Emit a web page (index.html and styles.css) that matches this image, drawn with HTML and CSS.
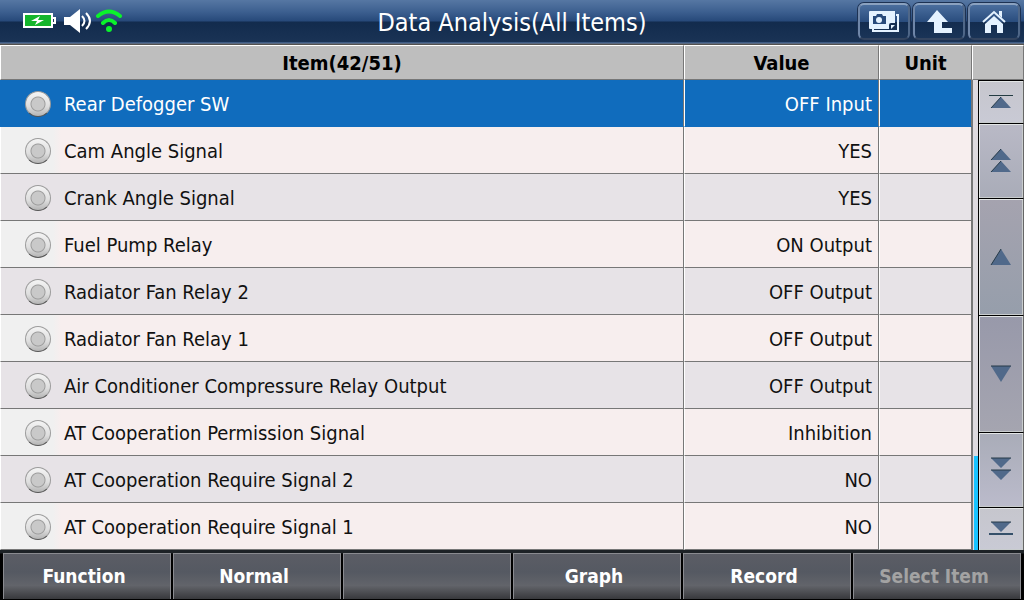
FILE: index.html
```html
<!DOCTYPE html>
<html lang="en">
<head>
  <meta charset="UTF-8">
  <meta name="viewport" content="width=device-width, initial-scale=1.0">
  <title>Data Analysis</title>
  <link rel="stylesheet" href="styles.css">
</head>
<body>
  <header class="topbar">
    <div class="status">
      <svg class="battery" width="34" height="18" viewBox="0 0 34 18">
        <path d="M1 1h30v4h3v7h-3v4H1z" fill="#fff"/>
        <path d="M3 3h26v11H3z" fill="#14b52c"/>
        <path d="M31 7h1v3h-1z" fill="#1c3457"/>
        <path d="M18 4l-9 5h6l-2 4 9-5h-6z" fill="#fff"/>
      </svg>
      <svg class="sound" width="28" height="24" viewBox="0 0 28 24">
        <path d="M0 8h6L16 0v24l-10-8H0z" fill="#fff"/>
        <path d="M18 7q5 5 0 10M22 4q8 8 0 16" fill="none" stroke="#fff" stroke-width="2"/>
      </svg>
      <svg class="wifi" width="28" height="24" viewBox="0 0 28 24">
        <path d="M3 7Q14-2 25 7M8 14q6-6 12 0" fill="none" stroke="#0bf22b" stroke-width="4" stroke-linecap="round"/>
        <circle cx="14" cy="20" r="3" fill="#0bf22b"/>
      </svg>
    </div>
    <h1 class="title">Data Analysis(All Items)</h1>
    <div class="tools">
      <button class="tool" type="button" aria-label="Capture">
        <svg width="34" height="24" viewBox="0 0 34 24">
          <path d="M29 5h2v16H6v-2" fill="none" stroke="#e4f2ff" stroke-width="2"/>
          <path d="M3 1h25v12h-4q-2 0-2 2v4H3q-1 0-1-1V2q0-1 1-1z" fill="#e4f2ff"/>
          <path d="M24 19v-4h4z" fill="#e4f2ff"/>
          <path d="M6 6h3l1-2h5l1 2h3v8H6z" fill="#274a7b"/>
          <circle cx="12" cy="10" r="3" fill="#e4f2ff"/>
        </svg>
      </button>
      <button class="tool" type="button" aria-label="Back">
        <svg width="28" height="26" viewBox="0 0 28 26">
          <path d="M12 1l11 12h-6v6h10v5H9V13H2z" fill="#e4f2ff"/>
        </svg>
      </button>
      <button class="tool" type="button" aria-label="Home">
        <svg width="26" height="26" viewBox="0 0 26 26">
          <path d="M2 13L13 3l11 10" fill="none" stroke="#e4f2ff" stroke-width="2"/>
          <path d="M18 2h3v7l-3-3zM4 15l9-8 9 8v9h-6v-8h-6v8H4z" fill="#e4f2ff"/>
        </svg>
      </button>
    </div>
  </header>

  <main class="content">
    <table class="items">
      <colgroup>
        <col>
        <col class="col-value">
        <col class="col-unit">
      </colgroup>
      <thead>
        <tr><th>Item(42/51)</th><th>Value</th><th>Unit</th></tr>
      </thead>
      <tbody>
        <tr class="selected"><td><label class="item"><input type="radio" name="item"><span>Rear Defogger SW</span></label></td><td>OFF Input</td><td></td></tr>
        <tr><td><label class="item"><input type="radio" name="item"><span>Cam Angle Signal</span></label></td><td>YES</td><td></td></tr>
        <tr><td><label class="item"><input type="radio" name="item"><span>Crank Angle Signal</span></label></td><td>YES</td><td></td></tr>
        <tr><td><label class="item"><input type="radio" name="item"><span>Fuel Pump Relay</span></label></td><td>ON Output</td><td></td></tr>
        <tr><td><label class="item"><input type="radio" name="item"><span>Radiator Fan Relay 2</span></label></td><td>OFF Output</td><td></td></tr>
        <tr><td><label class="item"><input type="radio" name="item"><span>Radiator Fan Relay 1</span></label></td><td>OFF Output</td><td></td></tr>
        <tr><td><label class="item"><input type="radio" name="item"><span>Air Conditioner Compressure Relay Output</span></label></td><td>OFF Output</td><td></td></tr>
        <tr><td><label class="item"><input type="radio" name="item"><span>AT Cooperation Permission Signal</span></label></td><td>Inhibition</td><td></td></tr>
        <tr><td><label class="item"><input type="radio" name="item"><span>AT Cooperation Require Signal 2</span></label></td><td>NO</td><td></td></tr>
        <tr><td><label class="item"><input type="radio" name="item"><span>AT Cooperation Require Signal 1</span></label></td><td>NO</td><td></td></tr>
      </tbody>
    </table>

    <aside class="scroller">
      <div class="scroller-head"></div>
      <div class="track"><div class="thumb"></div></div>
      <nav class="pager">
        <button class="end" type="button" aria-label="First">
          <svg width="24" height="16" viewBox="0 0 24 16"><path d="M0 1h24v1H0z" fill="#243c42"/><path d="M12 3l10 11H2z" fill="#50698a"/><path d="M12 3L2 14" stroke="#263a48"/></svg>
        </button>
        <button class="page" type="button" aria-label="Page up">
          <svg width="24" height="26" viewBox="0 0 24 26"><path d="M12 1l10 11H2zM12 13l10 11H2z" fill="#50698a"/><path d="M12 1L2 12M12 13L2 24" stroke="#263a48"/></svg>
        </button>
        <button class="line" type="button" aria-label="Up">
          <svg width="24" height="18" viewBox="0 0 24 18"><path d="M12 1l10 16H2z" fill="#50698a"/><path d="M12 1L2 17" stroke="#263a48"/></svg>
        </button>
        <button class="line down" type="button" aria-label="Down">
          <svg width="24" height="18" viewBox="0 0 24 18"><path d="M2 1h20L12 17z" fill="#50698a"/><path d="M2 1h20" stroke="#263a48"/></svg>
        </button>
        <button class="page down" type="button" aria-label="Page down">
          <svg width="24" height="26" viewBox="0 0 24 26"><path d="M2 1h20L12 11zM2 13h20L12 23z" fill="#50698a"/><path d="M2 1h20M2 13h20" stroke="#263a48"/></svg>
        </button>
        <button class="end down" type="button" aria-label="Last">
          <svg width="24" height="16" viewBox="0 0 24 16"><path d="M2 1h20L12 11z" fill="#50698a"/><path d="M2 1h20" stroke="#263a48"/><path d="M0 12h24v2H0z" fill="#35506a"/></svg>
        </button>
      </nav>
    </aside>
  </main>

  <footer class="menu">
    <button type="button">Function</button>
    <button type="button">Normal</button>
    <button type="button" aria-label="Empty"></button>
    <button type="button">Graph</button>
    <button type="button">Record</button>
    <button type="button" disabled>Select Item</button>
  </footer>
</body>
</html>
```

FILE: styles.css
```css
* {
  box-sizing: border-box;
}
body {
  display: flex;
  flex-direction: column;
  min-height: 100vh;
  margin: 0;
  background: #000;
  color: #111;
  font-family: "DejaVu Sans Condensed", "Noto Sans", sans-serif;
  font-size: 20px;
}
button {
  font-family: inherit;
  cursor: pointer;
}
svg {
  display: block;
}

/* top bar */
.topbar {
  display: grid;
  grid-template-columns: 1fr auto 1fr;
  height: 45px;
  background: linear-gradient(#5677a3 0, #3c5f8f 12px, #27497a 21px, #122b4d 22px, #1a3355 42px, #6384b4 43px, #54514e 44px, #54514e 45px);
}
.status {
  display: flex;
  align-items: center;
  gap: 8px;
  padding: 0 0 5px 22px;
}
.wifi {
  margin-left: -5px;
}
.title {
  margin: 0;
  color: #fff;
  font-size: 25px;
  font-weight: normal;
  line-height: 46px;
}
.tools {
  display: flex;
  justify-content: flex-end;
  align-items: flex-start;
  gap: 3px;
  padding: 3px 4px 0 0;
}
.tool {
  display: flex;
  justify-content: center;
  align-items: center;
  width: 52px;
  height: 37px;
  padding: 0;
  border: 2px solid;
  border-color: #8ba2c0 #4f6788 #33445f #6f86a8;
  border-radius: 6px;
  background: linear-gradient(#4a6e9e, #2a4d7e 50%, #132c4f 51%, #1a3457);
  box-shadow: 0 0 0 1px #1d3253;
}

/* data table */
.content {
  display: flex;
  flex: 1;
  background: #dedadf;
}
.items {
  flex: 1;
  table-layout: fixed;
  border-collapse: separate;
  border-spacing: 0;
}
.col-value {
  width: 195px;
}
.col-unit {
  width: 93px;
}
.items th {
  height: 35px;
  padding: 1px 0 0;
  border: 1px solid #fff;
  border-right-color: #777;
  border-bottom-color: #777;
  background: #bebebe;
  color: #000;
  line-height: 24px;
}
.items td {
  height: 47px;
  padding: 1px 6px 0;
  border-left: 1px solid #fff;
  border-right: 1px solid #777;
  border-bottom: 1px solid #777;
  background: #e7e3e7;
  line-height: 24px;
  text-align: right;
}
.items td:first-child {
  padding: 1px 0 0 24px;
  text-align: left;
}
.items tbody tr:nth-child(even) td {
  background: #f7eeee;
}
.items tbody tr:nth-child(even) td:first-child {
  background: linear-gradient(90deg, #f0f0f0 52px, #f7eeee 60px);
}
.items tbody .selected td {
  border-bottom-color: #106cbd;
  background: #106cbd;
  color: #fff;
}
.items .selected td:first-child {
  border-left-color: #106cbd;
}
.item {
  display: flex;
  align-items: center;
  gap: 13px;
}
.item input {
  appearance: none;
  width: 26px;
  height: 26px;
  margin: 0;
  border: 1px solid #9c9c9c;
  border-bottom-color: #555;
  border-radius: 50%;
  background:
    radial-gradient(circle, #c9c9c9 6px, #9d9d9d 7px, transparent 8px),
    linear-gradient(#f4f4f4, #dedede 60%, #b4b4b4);
}

/* scroll column */
.scroller {
  display: grid;
  grid-template-columns: 6px 46px;
  grid-template-rows: 35px 1fr;
}
.scroller-head {
  grid-column: 1 / 3;
  border: 1px solid #fff;
  border-bottom-color: #777;
  border-right-color: #777;
  background: #bebebe;
}
.track {
  display: flex;
  align-items: flex-end;
  border-left: 1px solid #777;
  background: #dedadf;
}
.thumb {
  flex: 1;
  height: 20%;
  margin-left: 1px;
  background: #18c3ff;
}
.pager {
  display: grid;
  grid-template-rows: 43fr 75fr 117fr 117fr 75fr 43fr;
}
.pager button {
  display: flex;
  justify-content: center;
  align-items: center;
  padding: 0;
  border: 1px solid #000;
  border-right-color: #666;
  border-bottom: 0;
  box-shadow: inset 1px 1px #e2e5e5, inset -1px -1px #c8cccd;
}
.end {
  background: linear-gradient(#c6c6cd, #c9cad5);
}
.page {
  background: linear-gradient(#b9b9c6, #a9acb8);
}
.line {
  background: linear-gradient(#a5a3af, #969eab);
}
.page.down {
  background: linear-gradient(#a9acb8, #bbbbcb);
}
.line.down {
  background: linear-gradient(#9899aa, #a5a5b0);
}

/* bottom menu */
.menu {
  display: grid;
  grid-template-columns: repeat(6, 1fr);
  gap: 2px;
  height: 50px;
  padding: 3px 3px 1px;
  background: linear-gradient(#1d2226 3px, #000 4px);
}
.menu button {
  padding: 0 6px 2px 0;
  border: 1px solid #8a8b90;
  border-bottom: 0;
  background: linear-gradient(#5b5d65, #555962 40%, #62646a 70%, #46474b 90%, #38393c);
  color: #fff;
  font-size: 19px;
  font-weight: bold;
}
.menu button:disabled {
  color: #a3a3a3;
}
```
